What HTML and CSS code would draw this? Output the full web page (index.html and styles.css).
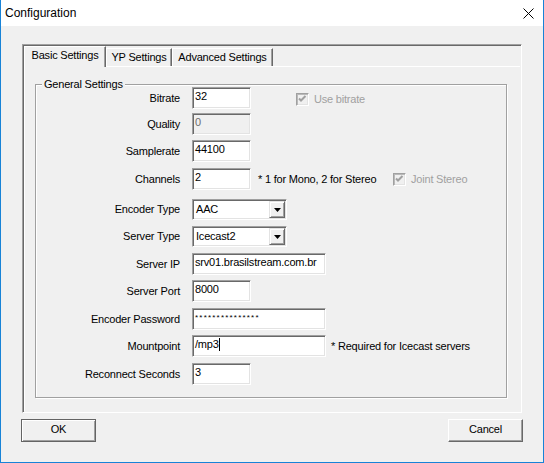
FILE: index.html
```html
<!DOCTYPE html>
<html>
<head>
<meta charset="utf-8">
<link rel="stylesheet" href="styles.css">
</head>
<body>
<div class="window">
  <div class="titlebar">
    <span class="title">Configuration</span>
    <svg class="close" width="11" height="11" viewBox="0 0 11 11"><path d="M0.5 0.5L10.5 10.5M10.5 0.5L0.5 10.5" stroke="#000" stroke-width="1" fill="none"/></svg>
  </div>
  <div class="content">
    <div class="tabframe">
      <div class="tabs">
        <div class="tab active t1">Basic Settings</div>
        <div class="tab t2">YP Settings</div>
        <div class="tab t3">Advanced Settings</div>
      </div>
      <div class="panel">
        <div class="group">
          <div class="caption">General Settings</div>
          <div class="rows">
            <div class="row">
              <span class="lbl">Bitrate</span>
              <div class="field short">32</div>
              <div class="check cb-bitrate">
                <span class="box"><svg width="9" height="9" viewBox="0 0 9 9"><path d="M1 3.5L3 5.5L7.5 1" stroke="#a0a0a0" stroke-width="2" fill="none"/></svg></span>
                <span class="cl">Use bitrate</span>
              </div>
            </div>
            <div class="row">
              <span class="lbl">Quality</span>
              <div class="field short disabled">0</div>
            </div>
            <div class="row">
              <span class="lbl">Samplerate</span>
              <div class="field short">44100</div>
            </div>
            <div class="row">
              <span class="lbl">Channels</span>
              <div class="field short">2</div>
              <span class="note note-ch">* 1 for Mono, 2 for Stereo</span>
              <div class="check">
                <span class="box"><svg width="9" height="9" viewBox="0 0 9 9"><path d="M1 3.5L3 5.5L7.5 1" stroke="#a0a0a0" stroke-width="2" fill="none"/></svg></span>
                <span class="cl">Joint Stereo</span>
              </div>
            </div>
            <div class="row combo-row">
              <span class="lbl">Encoder Type</span>
              <div class="combo">
                <span class="ctext">AAC</span>
                <span class="drop"><svg width="7" height="4" viewBox="0 0 7 4"><path d="M0 0H7L3.5 4Z" fill="#000"/></svg></span>
              </div>
            </div>
            <div class="row combo-row">
              <span class="lbl">Server Type</span>
              <div class="combo">
                <span class="ctext">Icecast2</span>
                <span class="drop"><svg width="7" height="4" viewBox="0 0 7 4"><path d="M0 0H7L3.5 4Z" fill="#000"/></svg></span>
              </div>
            </div>
            <div class="row">
              <span class="lbl">Server IP</span>
              <div class="field long">srv01.brasilstream.com.br</div>
            </div>
            <div class="row">
              <span class="lbl">Server Port</span>
              <div class="field short">8000</div>
            </div>
            <div class="row">
              <span class="lbl">Encoder Password</span>
              <div class="field long pw">***************</div>
            </div>
            <div class="row">
              <span class="lbl">Mountpoint</span>
              <div class="field long">/mp3<span class="caret"></span></div>
              <span class="note note-mp">* Required for Icecast servers</span>
            </div>
            <div class="row">
              <span class="lbl">Reconnect Seconds</span>
              <div class="field short">3</div>
            </div>
          </div>
        </div>
      </div>
    </div>
    <div class="buttons">
      <div class="btn default">OK</div>
      <div class="btn">Cancel</div>
    </div>
  </div>
</div>
</body>
</html>
```

FILE: styles.css
```css
html, body {
  margin: 0;
  padding: 0;
  background: #f0f0f0;
}
.window {
  width: 544px;
  height: 463px;
  box-sizing: border-box;
  border: 1px solid #1883d7;
  border-top: none;
  background: #f0f0f0;
  display: flex;
  flex-direction: column;
  font-family: "Liberation Sans", Arial, sans-serif;
  font-size: 11px;
  line-height: 13px;
  letter-spacing: -0.2px;
  color: #000;
}
.titlebar {
  height: 26px;
  flex: none;
  background: #fff;
  display: flex;
  align-items: center;
  justify-content: space-between;
  padding: 0 9px 0 4px;
}
.title {
  font-size: 12px;
  line-height: 26px;
  letter-spacing: 0;
}
.close {
  display: block;
  margin-top: 1px;
}
.content {
  flex: 1;
  padding: 18px 21px 0 21px;
  display: flex;
  flex-direction: column;
}
.tabframe {
  height: 369px;
  box-sizing: border-box;
  border: 1px solid;
  border-color: #a0a0a0 #fff #fff #a0a0a0;
  box-shadow: inset 1px 1px #696969;
  display: flex;
  flex-direction: column;
}
.tabs {
  height: 21px;
  flex: none;
  display: flex;
  align-items: flex-start;
  margin-left: 1px;
}
.tab {
  box-sizing: border-box;
  height: 18px;
  margin-top: 3px;
  padding-top: 2px;
  border-top: 1px solid #fff;
  border-left: 1px solid #fff;
  border-right: 1px solid #696969;
  box-shadow: inset -1px 0 #a0a0a0;
  text-align: center;
  white-space: nowrap;
  background: #f0f0f0;
}
.tab.active {
  height: 21px;
  margin-top: 1px;
  position: relative;
  z-index: 1;
}
.t1 { width: 82px; }
.t2 { width: 66px; }
.t3 { width: 101px; }
.panel {
  flex: 1;
  margin: 0 1px 1px 1px;
  border-top: 1px solid #fff;
  border-left: 1px solid #fff;
}
.group {
  position: relative;
  margin: 17px 0 0 10px;
  width: 472px;
  height: 314px;
  box-sizing: border-box;
  border: 1px solid #a0a0a0;
  box-shadow: inset 1px 1px #fff, 1px 1px #fff;
}
.caption {
  position: absolute;
  left: 6px;
  top: -7px;
  padding: 0 2px;
  background: #f0f0f0;
}
.rows {
  padding-top: 2px;
  display: grid;
  grid-template-rows: 26px 27px 28px 31px 27px 27px 27px 28px 27px 28px 22px;
}
.row {
  display: flex;
  align-items: center;
  height: 22px;
}
.combo-row {
  height: 21px;
}
.lbl {
  width: 144px;
  margin-right: 12px;
  text-align: right;
  flex: none;
}
.field {
  box-sizing: border-box;
  height: 22px;
  border: 1px solid;
  border-color: #a0a0a0 #fff #fff #a0a0a0;
  box-shadow: inset 1px 1px #696969, inset -1px -1px #e3e3e3;
  background: #fff;
  padding: 2px 2px 0 2px;
  white-space: nowrap;
  overflow: hidden;
  flex: none;
}
.short { width: 59px; }
.long { width: 134px; }
.disabled {
  background: #f0f0f0;
  color: #6d6d6d;
}
.pw {
  font-size: 8px;
  letter-spacing: 1.2px;
  line-height: 13px;
}
.caret {
  display: inline-block;
  width: 0;
  height: 13px;
  border-left: 1px solid #000;
  vertical-align: top;
}
.combo {
  box-sizing: border-box;
  width: 95px;
  height: 21px;
  border: 1px solid;
  border-color: #a0a0a0 #fff #fff #a0a0a0;
  padding: 1px;
  box-shadow: inset 1px 1px #696969, inset -1px -1px #e3e3e3;
  background: #fff;
  display: flex;
  flex: none;
}
.ctext {
  flex: 1;
  padding-left: 2px;
  line-height: 17px;
}
.drop {
  width: 16px;
  height: 17px;
  box-sizing: border-box;
  background: #f0f0f0;
  border: 1px solid;
  border-color: #e3e3e3 #696969 #696969 #e3e3e3;
  box-shadow: inset 1px 1px #fff, inset -1px -1px #a0a0a0;
  display: flex;
  align-items: center;
  justify-content: center;
}
.drop svg {
  display: block;
  margin-top: 1px;
}
.check {
  display: flex;
  align-items: center;
  color: #a0a0a0;
  flex: none;
}
.cb-bitrate {
  margin-left: 45px;
  margin-top: 3px;
}
.box {
  box-sizing: border-box;
  width: 13px;
  height: 13px;
  border: 1px solid;
  border-color: #a0a0a0 #fff #fff #a0a0a0;
  box-shadow: inset 1px 1px #b9b9b9, inset -1px -1px #e3e3e3;
  background: #f0f0f0;
  display: flex;
  align-items: center;
  justify-content: center;
  margin-right: 5px;
}
.box svg {
  display: block;
}
.note {
  flex: none;
  white-space: nowrap;
}
.note-ch {
  margin-left: 7px;
  width: 135px;
}
.note-mp {
  margin-left: 5px;
}
.buttons {
  display: flex;
  justify-content: space-between;
  margin: 6px -1px 0 -1px;
}
.btn {
  width: 75px;
  height: 23px;
  box-sizing: border-box;
  border: 1px solid;
  border-color: #fff #696969 #696969 #fff;
  box-shadow: inset -1px -1px #a0a0a0;
  background: #f0f0f0;
  text-align: center;
  line-height: 19px;
}
.btn.default {
  border-color: #646464;
  box-shadow: inset 1px 1px #fff, inset -1px -1px #a0a0a0;
}
```
